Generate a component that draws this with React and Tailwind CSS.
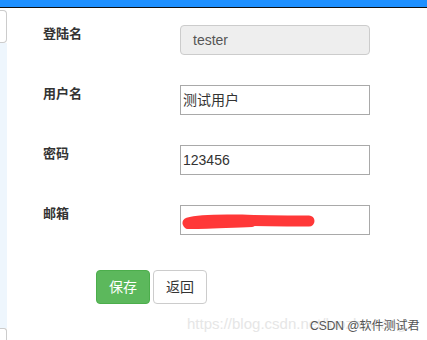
const cjk = { fontFamily: '"Liberation Sans", "Noto Sans CJK SC", sans-serif' };

const Label = ({ children }) => (
  <div className="w-[137px] shrink-0 text-[13px] leading-[18px] font-bold text-[#333]" style={cjk}>
    {children}
  </div>
);

const Scribble = () => (
  <svg className="absolute left-[1px] top-[4px]" width="140" height="22" viewBox="0 0 140 22">
    <path d="M36 17 l6 0 M60 14 l3 0 M88 13 l4 0" stroke="#233" strokeWidth="1" fill="none" />
    <path d="M6 13 C 20 9, 40 10, 60 10 C 80 11, 100 11, 127 11" stroke="#ff3838" strokeWidth="11" strokeLinecap="round" fill="none" />
    <path d="M6 15 C 20 15, 40 14, 70 13" stroke="#ff3838" strokeWidth="8" strokeLinecap="round" fill="none" />
  </svg>
);

export default function App() {
  return (
    <div className="w-[427px] h-[340px] overflow-hidden bg-white flex flex-col relative" style={cjk}>
      <div className="h-[8px] shrink-0 bg-[#1e90ff] border-b border-[#111]" />
      <div className="flex flex-1">
        <div className="w-[7px] shrink-0 flex flex-col">
          <div className="mt-[2px] h-[33px] bg-white border border-l-0 border-[#ccc] rounded-r-[4px]" />
          <div className="flex-1 bg-[#eef6fd]" />
          <div className="h-[12px] bg-white border-t border-r border-[#ccc] rounded-tr-[3px]" />
        </div>
        <div className="flex-1 flex flex-col pl-[36px] pt-[17px]">
          <div className="flex items-start h-[30px] mb-[30px]">
            <Label>登陆名</Label>
            <div className="w-[190px] h-[30px] rounded-[4px] bg-[#eeeeee] border border-[#ccc] pl-[12px] flex items-center text-[14px] text-[#555]">
              tester
            </div>
          </div>
          <div className="flex items-start h-[30px] mb-[30px]">
            <Label>用户名</Label>
            <div className="w-[190px] h-[30px] border border-[#a9a9a9] pl-[2px] flex items-center text-[14px] text-[#333]">
              测试用户
            </div>
          </div>
          <div className="flex items-start h-[30px] mb-[30px]">
            <Label>密码</Label>
            <div className="w-[190px] h-[30px] border border-[#a9a9a9] pl-[2px] flex items-center text-[14px] text-[#333]">
              123456
            </div>
          </div>
          <div className="flex items-start h-[30px] mb-[35px]">
            <Label>邮箱</Label>
            <div className="relative w-[190px] h-[30px] border border-[#a9a9a9]">
              <Scribble />
            </div>
          </div>
          <div className="flex gap-[3px] pl-[53px]">
            <div className="w-[54px] h-[34px] rounded-[4px] bg-[#5cb85c] border border-[#4cae4c] text-white text-[14px] flex items-center justify-center">
              保存
            </div>
            <div className="w-[54px] h-[34px] rounded-[4px] bg-white border border-[#ccc] text-[#333] text-[14px] flex items-center justify-center">
              返回
            </div>
          </div>
        </div>
      </div>
      <div className="absolute left-[187px] top-[313px] text-[15px] text-[#e6e6e6] whitespace-nowrap" style={cjk}>
        https://blog.csdn.net/luozhuwang
      </div>
      <div className="absolute left-[310px] top-[317px] text-[12px] text-[#555] whitespace-nowrap" style={cjk}>
        CSDN @软件测试君
      </div>
    </div>
  );
}
